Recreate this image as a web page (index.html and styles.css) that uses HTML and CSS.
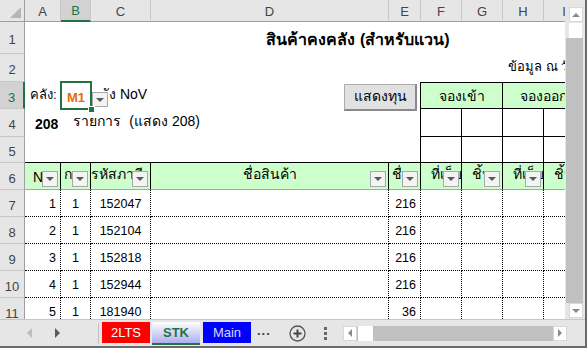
FILE: index.html
```html
<!DOCTYPE html>
<html lang="th">
<head>
  <meta charset="UTF-8" />
  <title>STK</title>
  <link rel="stylesheet" href="styles.css">
</head>
<body>

<div class="app">
  <div class="main">
    <div class="sheet">
      <!-- column headers -->
      <div class="corner"><span class="tri"></span></div>
      <div class="ch">A</div>
      <div class="ch sel">B</div>
      <div class="ch">C</div>
      <div class="ch">D</div>
      <div class="ch">E</div>
      <div class="ch">F</div>
      <div class="ch">G</div>
      <div class="ch">H</div>
      <div class="ch">I</div>

      <!-- row 1 -->
      <div class="rh">1</div>
      <div class="c"></div><div class="c"></div><div class="c"></div>
      <div class="c title span6">สินค้าคงคลัง (สำหรับแวน)</div>

      <!-- row 2 -->
      <div class="rh">2</div>
      <div class="c"></div><div class="c"></div><div class="c"></div><div class="c"></div>
      <div class="c"></div><div class="c"></div><div class="c"></div>
      <div class="c span2 asof">ข้อมูล ณ วันที่</div>

      <!-- row 3 -->
      <div class="rh sel">3</div>
      <div class="c lbl">คลัง:</div>
      <div class="c active">M1</div>
      <div class="c wh"><span class="dd"></span>ัง NoV</div>
      <div class="c"></div>
      <div class="c edge"></div>
      <div class="c span2 grp">จองเข้า</div>
      <div class="c span2 grp">จองออก</div>

      <!-- row 4 -->
      <div class="rh">4</div>
      <div class="c span4 count"><b>208</b><span class="u">รายการ</span><span class="s">(แสดง 208)</span></div>
      <div class="c edge"></div>
      <div class="c box"></div><div class="c box"></div><div class="c box"></div><div class="c box"></div>

      <!-- row 5 -->
      <div class="rh">5</div>
      <div class="c top"></div><div class="c top"></div><div class="c top"></div><div class="c top"></div>
      <div class="c top edge"></div>
      <div class="c box"></div><div class="c box"></div><div class="c box"></div><div class="c box"></div>

      <!-- row 6: table header with filters -->
      <div class="rh">6</div>
      <div class="c hd start p8">N<span class="fb"></span></div>
      <div class="c hd start p3">ก<span class="fb"></span></div>
      <div class="c hd start">รหัสภาษี<span class="fb"></span></div>
      <div class="c hd">ชื่อสินค้า<span class="fb"></span></div>
      <div class="c hd start p3">ชื่อ<span class="fb"></span></div>
      <div class="c hd start p10">ที่เก็บ<span class="fb"></span></div>
      <div class="c hd start p10">ชิ้น<span class="fb"></span></div>
      <div class="c hd start p10">ที่เก็บ<span class="fb"></span></div>
      <div class="c hd start p10">ชิ้น<span class="fb"></span></div>

      <!-- rows 7-11 -->
      <div class="rh">7</div>
      <div class="c d num">1</div><div class="c d mid">1</div><div class="c d mid">152047</div><div class="c d"></div>
      <div class="c d num">216</div><div class="c d"></div><div class="c d"></div><div class="c d"></div><div class="c d"></div>

      <div class="rh">8</div>
      <div class="c d num">2</div><div class="c d mid">1</div><div class="c d mid">152104</div><div class="c d"></div>
      <div class="c d num">216</div><div class="c d"></div><div class="c d"></div><div class="c d"></div><div class="c d"></div>

      <div class="rh">9</div>
      <div class="c d num">3</div><div class="c d mid">1</div><div class="c d mid">152818</div><div class="c d"></div>
      <div class="c d num">216</div><div class="c d"></div><div class="c d"></div><div class="c d"></div><div class="c d"></div>

      <div class="rh">10</div>
      <div class="c d num">4</div><div class="c d mid">1</div><div class="c d mid">152944</div><div class="c d"></div>
      <div class="c d num">216</div><div class="c d"></div><div class="c d"></div><div class="c d"></div><div class="c d"></div>

      <div class="rh">11</div>
      <div class="c d num">5</div><div class="c d mid">1</div><div class="c d mid">181940</div><div class="c d"></div>
      <div class="c d num">36</div><div class="c d"></div><div class="c d"></div><div class="c d"></div><div class="c d"></div>

      <button class="showcost">แสดงทุน</button>
    </div>

    <div class="vscroll">
      <div class="sbtn"><span class="up"></span></div>
      <div class="vthumb"></div>
      <div class="vtrack"></div>
      <div class="sbtn"><span class="down"></span></div>
    </div>
  </div>

  <div class="tabbar">
    <div class="nav">
      <span class="prev"></span>
      <span class="next"></span>
    </div>
    <div class="tabs">
      <div class="tab red">2LTS</div>
      <div class="tab cur">STK</div>
      <div class="tab blue">Main</div>
    </div>
    <div class="more">...</div>
    <div class="add">
      <svg width="17" height="17" viewBox="0 0 17 17">
        <circle cx="8.5" cy="8.5" r="7.5" fill="none" stroke="#555" stroke-width="1.3"/>
        <path d="M8.5 4.5v8M4.5 8.5h8" stroke="#444" stroke-width="2"/>
      </svg>
    </div>
    <div class="split"><i></i><i></i><i></i></div>
    <div class="hscroll">
      <div class="hbtn"><span class="arr-l"></span></div>
      <div class="hthumb"></div>
      <div class="htrack"></div>
      <div class="hbtn"><span class="arr-r"></span></div>
    </div>
  </div>
</div>

</body>
</html>
```

FILE: styles.css
```css
body{
  margin:0;
  background:#fff;
  font-family:"Liberation Sans", Tahoma, "Noto Sans", sans-serif;
}
.app{
  width:587px;height:348px;box-sizing:border-box;
  border-right:2px solid #6a6a6a;border-bottom:2px solid #6a6a6a;
  display:flex;flex-direction:column;overflow:hidden;
}
.main{display:flex;height:319px;}

/* ---- grid of cells ---- */
.sheet{
  position:relative;
  width:565px;height:319px;overflow:hidden;flex:none;
  display:grid;
  grid-template-columns:25px 36px 30px 60px 238px 32px 41px 41px 41px 41px;
  grid-template-rows:22px 32px 28px 27px 28px 26px 27px 27px 27px 27px 27px 27px;
}
.corner,.ch,.rh{
  background:#e6e6e6;color:#444;
  box-sizing:border-box;
  font-size:13px;
  display:flex;align-items:center;justify-content:center;
}
.corner{
  border-right:1px solid #9f9f9f;border-bottom:1px solid #9f9f9f;
  align-items:flex-end;justify-content:flex-end;padding:0 3px 3px 0;
}
.tri{
  width:0;height:0;
  border-left:11px solid transparent;border-bottom:11px solid #b5b5b5;
}
.ch{border-right:1px solid #c8c8c8;border-bottom:1px solid #9f9f9f;padding-top:1px;}
.ch.sel{background:#d2d2d2;color:#217346;border-bottom:2px solid #217346;}
.rh{border-bottom:1px solid #c8c8c8;border-right:1px solid #9f9f9f;font-size:13px;padding-top:4px;}
.rh.sel{background:#d2d2d2;color:#217346;border-right:2px solid #217346;}

.c{
  position:relative;box-sizing:border-box;
  font-size:13px;color:#000;white-space:nowrap;
  display:flex;align-items:flex-end;padding-bottom:4px;
}
.span2{grid-column:span 2;}
.span4{grid-column:span 4;}
.span6{grid-column:span 6;}

.title{
  justify-content:center;align-items:center;padding:2px 20px 0 0;
  font-size:16px;font-weight:bold;
}
.asof{padding-left:5px;padding-bottom:5px;font-size:13px;}

.lbl{padding-left:5px;}
.active{
  outline:2px solid #217346;outline-offset:-1px;z-index:2;
  justify-content:center;
  color:#e36c09;font-weight:bold;font-size:13px;
}
.active::after{
  content:"";position:absolute;right:-4px;bottom:-4px;
  width:5px;height:5px;background:#217346;border:1px solid #fff;
}
.wh{padding-left:18px;font-size:14px;}
.dd{
  position:absolute;left:1px;top:10px;
  width:16px;height:15px;box-sizing:border-box;
  background:#f3f3f3;border:1px solid #a9a9a9;
  display:flex;align-items:center;justify-content:center;
}
.dd::after,.fb::after{
  content:"";width:0;height:0;
  border-left:4px solid transparent;border-right:4px solid transparent;
  border-top:4px solid #595959;
}

.edge{border-right:1px solid #000;}
.top{border-bottom:1px solid #000;}
.grp{
  background:#ccffcc;justify-content:center;align-items:center;padding:0;
  border-top:1px solid #000;border-right:1px solid #000;border-bottom:1px solid #000;
  font-size:14px;
}
.box{border-right:1px solid #000;border-bottom:1px solid #000;}

.count{padding-left:10px;font-size:14px;padding-bottom:5px;}
.count b{font-size:14px;}
.count .u{margin-left:15px;}
.count .s{margin-left:8px;}

/* header row of the list */
.hd{
  background:#ccffcc;overflow:hidden;
  border-right:1px solid #000;border-bottom:1px solid #a6a6a6;
  justify-content:center;padding-bottom:4px;font-size:14px;
}
.hd.start{justify-content:flex-start;}
.p3{padding-left:3px;}
.p8{padding-left:8px;}
.p10{padding-left:10px;}
.fb{
  position:absolute;right:2px;bottom:2px;
  width:16px;height:16px;box-sizing:border-box;
  background:#f3f3f3;border:1px solid #a9a9a9;
  display:flex;align-items:center;justify-content:center;
}

/* data rows */
.d{border-right:1px dotted #000;border-bottom:1px dotted #000;font-size:12.5px;padding-bottom:5px;}
.num{justify-content:flex-end;padding-right:4px;}
.mid{justify-content:center;}

.showcost{
  position:absolute;left:344px;top:84px;
  width:73px;height:27px;box-sizing:border-box;
  background:#e1e1e1;border:1px solid #adadad;
  border-right:2px solid #8a8a8a;border-bottom:2px solid #8a8a8a;
  font-family:inherit;font-size:14px;color:#000;padding:0 0 2px;
}

/* vertical scrollbar */
.vscroll{
  width:20px;flex:none;background:#e6e6e6;box-sizing:border-box;
  padding:7px 2px 1px 1px;display:flex;flex-direction:column;
}
.vthumb{height:15px;background:#fff;margin:1px 1px 0 3px;}
.vtrack{flex:1;background:#c0c0c0;}
.sbtn{
  height:13px;margin-left:3px;background:#fff;border:1px solid #d8d8d8;
  display:flex;align-items:center;justify-content:center;
}
.up,.down{width:0;height:0;border-left:4px solid transparent;border-right:4px solid transparent;}
.up{border-bottom:4px solid #8a8a8a;}
.down{border-top:4px solid #8a8a8a;}

/* sheet tabs */
.tabbar{
  flex:1;background:#e6e6e6;border-top:1px solid #c6c6c6;
  display:flex;align-items:center;font-size:13px;
}
.nav{
  width:99px;height:21px;border-right:1px solid #c0c0c0;
  display:flex;align-items:center;padding-left:27px;box-sizing:border-box;gap:23px;
}
.prev,.next{width:0;height:0;border-top:5px solid transparent;border-bottom:5px solid transparent;}
.prev{border-right:5px solid #bdbdbd;}
.next{border-left:5px solid #5a5a5a;}
.tabs{display:flex;gap:2px;margin-left:3px;align-self:flex-start;margin-top:2px;}
.tab{
  width:48px;height:21px;box-sizing:border-box;
  display:flex;align-items:center;justify-content:center;
  font-size:13px;
}
.red{background:#f00;color:#fff;}
.cur{
  background:linear-gradient(#fff, #aeaef2);color:#217346;font-weight:bold;
  border-bottom:2px solid #217346;height:23px;
}
.blue{background:#00f;color:#d8d8ff;margin-left:1px;}
.more{margin-left:6px;width:16px;color:#444;font-weight:bold;padding-bottom:6px;letter-spacing:1px;}
.add{margin-left:16px;display:flex;}
.split{margin-left:18px;display:flex;flex-direction:column;gap:2px;}
.split i{width:3px;height:3px;background:#666;}
.hscroll{
  margin-left:16px;width:224px;height:15px;
  display:flex;background:#c0c0c0;
}
.hbtn{
  width:14px;background:#fff;border:1px solid #d8d8d8;box-sizing:border-box;
  display:flex;align-items:center;justify-content:center;
}
.hthumb{width:15px;background:#fff;margin-left:1px;}
.htrack{flex:1;}
.arr-l,.arr-r{width:0;height:0;border-top:4px solid transparent;border-bottom:4px solid transparent;}
.arr-l{border-right:4px solid #8a8a8a;}
.arr-r{border-left:4px solid #8a8a8a;}
```
